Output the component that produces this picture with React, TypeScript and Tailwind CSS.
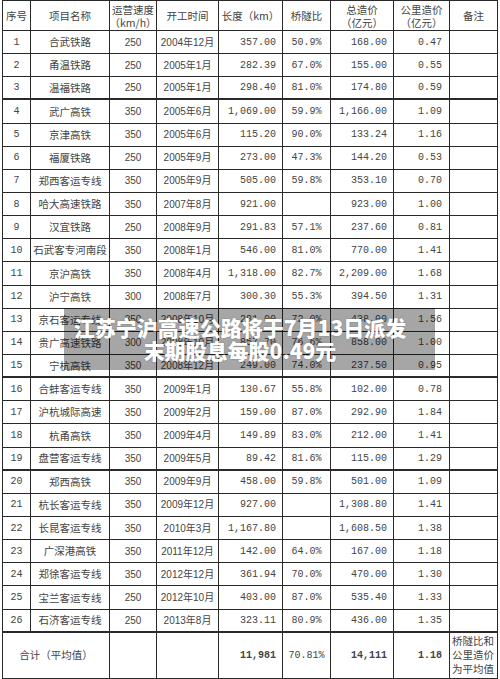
import React from "react";

type Row = [string, string, string, string, string, string, string, string];

const rows: Row[] = [
  ["1", "合武铁路", "250", "2004年12月", "357.00", "50.9%", "168.00", "0.47"],
  ["2", "甬温铁路", "250", "2005年1月", "282.39", "67.0%", "155.00", "0.55"],
  ["3", "温福铁路", "250", "2005年1月", "298.40", "81.0%", "174.80", "0.59"],
  ["4", "武广高铁", "350", "2005年6月", "1,069.00", "59.9%", "1,166.00", "1.09"],
  ["5", "京津高铁", "350", "2005年6月", "115.20", "90.0%", "133.24", "1.16"],
  ["6", "福厦铁路", "250", "2005年9月", "273.00", "47.3%", "144.20", "0.53"],
  ["7", "郑西客运专线", "350", "2005年9月", "505.00", "59.8%", "353.10", "0.70"],
  ["8", "哈大高速铁路", "350", "2007年8月", "921.00", "", "923.00", "1.00"],
  ["9", "汉宜铁路", "250", "2008年9月", "291.83", "57.1%", "237.60", "0.81"],
  ["10", "石武客专河南段", "350", "2008年1月", "546.00", "81.0%", "770.00", "1.41"],
  ["11", "京沪高铁", "350", "2008年4月", "1,318.00", "82.7%", "2,209.00", "1.68"],
  ["12", "沪宁高铁", "300", "2008年7月", "300.30", "55.3%", "394.50", "1.31"],
  ["13", "京石客运专线", "350", "2008年10月", "281.00", "72.0%", "438.00", "1.56"],
  ["14", "贵广高速铁路", "300", "2008年10月", "857.70", "76.6%", "858.00", "1.00"],
  ["15", "宁杭高铁", "350", "2008年12月", "249.00", "74.0%", "237.50", "0.95"],
  ["16", "合蚌客运专线", "350", "2009年1月", "130.67", "55.8%", "102.00", "0.78"],
  ["17", "沪杭城际高速", "350", "2009年2月", "159.00", "87.0%", "292.90", "1.84"],
  ["18", "杭甬高铁", "350", "2009年4月", "149.89", "83.0%", "212.00", "1.41"],
  ["19", "盘营客运专线", "350", "2009年5月", "89.42", "81.6%", "115.00", "1.29"],
  ["20", "郑西高铁", "350", "2009年9月", "458.00", "59.8%", "501.00", "1.09"],
  ["21", "杭长客运专线", "350", "2009年12月", "927.00", "", "1,308.80", "1.41"],
  ["22", "长昆客运专线", "350", "2010年3月", "1,167.80", "", "1,608.50", "1.38"],
  ["23", "广深港高铁", "350", "2011年12月", "142.00", "64.0%", "167.00", "1.18"],
  ["24", "郑徐客运专线", "350", "2012年12月", "361.94", "70.0%", "470.00", "1.30"],
  ["25", "宝兰客运专线", "250", "2012年10月", "403.00", "87.0%", "535.40", "1.33"],
  ["26", "石济客运专线", "250", "2013年8月", "323.11", "80.9%", "436.00", "1.35"],
];

const thick = new Set(["3", "15", "19", "26"]);

const cjk = "font-['Noto_Sans_CJK_SC',sans-serif] text-[10.5px]";
const mono = "font-['Liberation_Mono','Noto_Sans_CJK_SC',monospace] text-[10px]";
const sans = "font-['Liberation_Sans','Noto_Sans_CJK_SC',sans-serif] text-[10px]";

function Cell({ className, children }: { className: string; children?: React.ReactNode }) {
  return <div className={"flex items-center border-r border-[#2a2a2a] text-[#444] " + className}>{children}</div>;
}

function Head({ top, bottom }: { top: string; bottom?: string }) {
  return (
    <Cell className={"border-b justify-center text-center leading-[13px] " + cjk}>
      <div>
        <div>{top}</div>
        {bottom && <div>{bottom}</div>}
      </div>
    </Cell>
  );
}

export default function App() {
  return (
    <div className="relative w-[500px] h-[679px] overflow-hidden bg-white">
      <div className="ml-[2px] w-[496px] grid grid-cols-[28px_79px_47px_62px_64px_48px_63px_56px_48px] grid-rows-[30px_repeat(26,23.15px)_47px] border-l border-t border-[#2a2a2a]">
        <Head top="序号" />
        <Head top="项目名称" />
        <Head top="运营速度" bottom="（km/h）" />
        <Head top="开工时间" />
        <Head top="长度（km）" />
        <Head top="桥隧比" />
        <Head top="总造价" bottom="（亿元）" />
        <Head top="公里造价" bottom="（亿元）" />
        <Head top="备注" />

        {rows.map((r) => {
          const b = thick.has(r[0]) ? "border-b-2" : "border-b";
          return (
            <React.Fragment key={r[0]}>
              <Cell className={b + " justify-center " + mono}>{r[0]}</Cell>
              <Cell className={b + " justify-center whitespace-nowrap " + cjk}>{r[1]}</Cell>
              <Cell className={b + " justify-center " + sans}>{r[2]}</Cell>
              <Cell className={b + " justify-center whitespace-nowrap " + sans}>{r[3]}</Cell>
              <Cell className={b + " justify-end pr-[6px] " + mono}>{r[4]}</Cell>
              <Cell className={b + " justify-center " + mono}>{r[5]}</Cell>
              <Cell className={b + " justify-end pr-[6px] " + mono}>{r[6]}</Cell>
              <Cell className={b + " justify-end pr-[7px] " + mono}>{r[7]}</Cell>
              <Cell className={b} />
            </React.Fragment>
          );
        })}

        <Cell className={"col-span-2 border-b-2 justify-center " + cjk}>合计（平均值）</Cell>
        <Cell className="border-b-2" />
        <Cell className="border-b-2" />
        <Cell className={"border-b-2 justify-end pr-[6px] font-bold text-[#111] " + mono}>11,981</Cell>
        <Cell className={"border-b-2 justify-center " + mono}>70.81%</Cell>
        <Cell className={"border-b-2 justify-end pr-[6px] font-bold text-[#111] " + mono}>14,111</Cell>
        <Cell className={"border-b-2 justify-end pr-[7px] font-bold text-[#111] " + mono}>1.18</Cell>
        <Cell className={"border-b-2 pl-[2px] leading-[14px] " + cjk}>
          <div>
            <div>桥隧比和</div>
            <div>公里造价</div>
            <div>为平均值</div>
          </div>
        </Cell>
      </div>

      <div className="absolute left-[64px] top-[308px] w-[371px] h-[62px] bg-black/35 flex items-center justify-center pr-[19px]">
        <div className="text-center text-white font-black text-[21px] leading-[23px] font-['Noto_Sans_CJK_SC',sans-serif] [text-shadow:0_0_2px_rgba(0,0,0,0.25)]">
          <div>江苏宁沪高速公路将于7月13日派发</div>
          <div>末期股息每股0.49元</div>
        </div>
      </div>
    </div>
  );
}
